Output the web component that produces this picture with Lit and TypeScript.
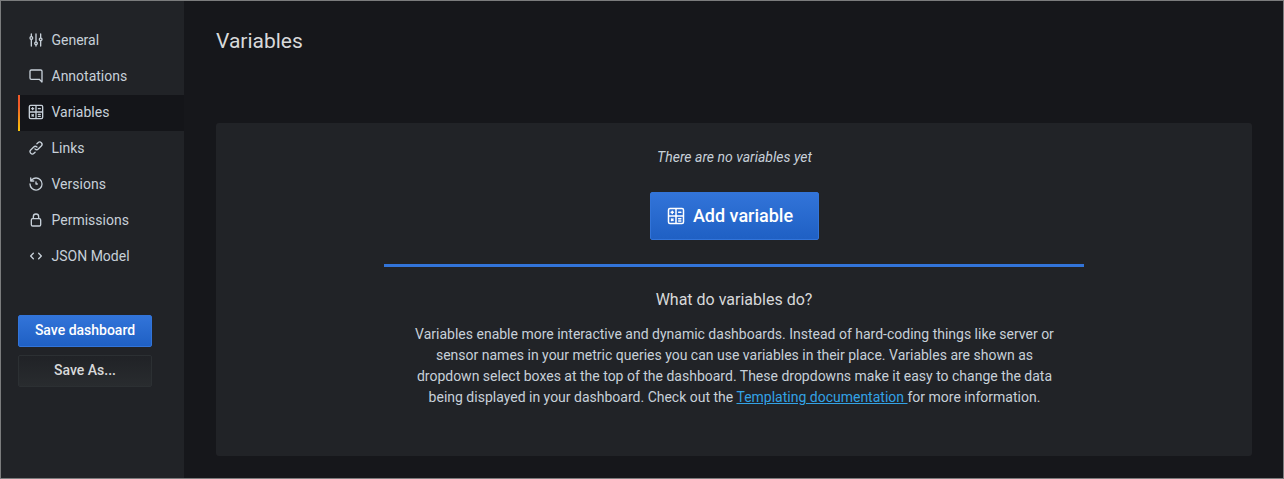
import { LitElement, html, css, svg } from "lit";
import { customElement } from "lit/decorators.js";
import { classMap } from "lit/directives/class-map.js";

const ICONS: Record<string, string> = {
  sliders:
    "M20,8.18V3a1,1,0,0,0-2,0V8.18a3,3,0,0,0,0,5.64V21a1,1,0,0,0,2,0V13.82a3,3,0,0,0,0-5.64ZM19,12a1,1,0,1,1,1-1A1,1,0,0,1,19,12Zm-6,2.18V3a1,1,0,0,0-2,0V14.18a3,3,0,0,0,0,5.64V21a1,1,0,0,0,2,0V19.82a3,3,0,0,0,0-5.64ZM12,18a1,1,0,1,1,1-1A1,1,0,0,1,12,18ZM6,6.18V3A1,1,0,0,0,4,3V6.18a3,3,0,0,0,0,5.64V21a1,1,0,0,0,2,0V11.82A3,3,0,0,0,6,6.18ZM5,10A1,1,0,1,1,6,9,1,1,0,0,1,5,10Z",
  comment:
    "M19,2H5A3,3,0,0,0,2,5V15a3,3,0,0,0,3,3H16.59l3.7,3.71A1,1,0,0,0,21,22a.84.84,0,0,0,.38-.08A1,1,0,0,0,22,21V5A3,3,0,0,0,19,2Zm1,16.59-2.29-2.3A1,1,0,0,0,17,16H5a1,1,0,0,1-1-1V5A1,1,0,0,1,5,4H19a1,1,0,0,1,1,1Z",
  calculator:
    "M20,1H4A3,3,0,0,0,1,4V20a3,3,0,0,0,3,3H20a3,3,0,0,0,3-3V4A3,3,0,0,0,20,1ZM11,21H4a1,1,0,0,1-1-1V13h8Zm0-10H3V4A1,1,0,0,1,4,3h7Zm10,9a1,1,0,0,1-1,1H13V13h8Zm0-9H13V3h7a1,1,0,0,1,1,1ZM5.5,8H6V8.5a1,1,0,0,0,2,0V8H8.5a1,1,0,0,0,0-2H8V5.5a1,1,0,0,0-2,0V6H5.5a1,1,0,0,0,0,2ZM15.5,8h3a1,1,0,0,0,0-2h-3a1,1,0,0,0,0,2ZM15.5,16.5h3a1,1,0,0,0,0-2h-3a1,1,0,0,0,0,2ZM15.5,19.5h3a1,1,0,0,0,0-2h-3a1,1,0,0,0,0,2ZM8.71,15.29a1,1,0,0,0-1.42,0L7,15.59l-.29-.3a1,1,0,0,0-1.42,1.42l.3.29-.3.29a1,1,0,0,0,1.42,1.42l.29-.3.29.3a1,1,0,0,0,1.42-1.42L8.41,17l.3-.29A1,1,0,0,0,8.71,15.29Z",
  link:
    "M10,17.55,8.23,19.27a2.47,2.47,0,0,1-3.5-3.5l4.54-4.55a2.46,2.46,0,0,1,3.39-.09l.12.1a1,1,0,0,0,1.4-1.43A2.75,2.75,0,0,0,14,9.59a4.46,4.46,0,0,0-6.09.22L3.31,14.36a4.48,4.48,0,0,0,6.33,6.33L11.37,19A1,1,0,0,0,10,17.55ZM20.69,3.31a4.49,4.49,0,0,0-6.33,0L12.63,5A1,1,0,0,0,14,6.45l1.73-1.72a2.47,2.47,0,0,1,3.5,3.5l-4.54,4.55a2.46,2.46,0,0,1-3.39.09l-.12-.1a1,1,0,0,0-1.4,1.43,2.75,2.75,0,0,0,.23.21,4.47,4.47,0,0,0,6.09-.22l4.55-4.55A4.49,4.49,0,0,0,20.69,3.31Z",
  history:
    "M12,2A10,10,0,0,0,5.12,4.77V3a1,1,0,0,0-2,0V7.5a1,1,0,0,0,1,1H8.62a1,1,0,0,0,0-2H6.22A8,8,0,1,1,4,12a1,1,0,0,0-2,0A10,10,0,1,0,12,2Zm0,6a1,1,0,0,0-1,1v3a1,1,0,0,0,1,1h2a1,1,0,0,0,0-2H13V9A1,1,0,0,0,12,8Z",
  lock:
    "M17,9V7A5,5,0,0,0,7,7V9a3,3,0,0,0-3,3v7a3,3,0,0,0,3,3H17a3,3,0,0,0,3-3V12A3,3,0,0,0,17,9ZM9,7a3,3,0,0,1,6,0V9H9Zm9,12a1,1,0,0,1-1,1H7a1,1,0,0,1-1-1V12a1,1,0,0,1,1-1H17a1,1,0,0,1,1,1Z",
  code:
    "M8.71,7.29a1,1,0,0,0-1.42,0l-4,4a1,1,0,0,0,0,1.42l4,4a1,1,0,0,0,1.42,0,1,1,0,0,0,0-1.42L5.41,12l3.3-3.29A1,1,0,0,0,8.71,7.29Zm12,4-4-4a1,1,0,0,0-1.42,1.42L18.59,12l-3.3,3.29a1,1,0,0,0,0,1.42,1,1,0,0,0,1.42,0l4-4A1,1,0,0,0,20.71,11.29Z",
};

const icon = (name: string, size = 16) => html`<svg
  width=${size} height=${size} viewBox="0 0 24 24" fill="currentColor" aria-hidden="true"
>${svg`<path d=${ICONS[name]}></path>`}</svg>`;

const NAV = [
  { label: "General", icon: "sliders" },
  { label: "Annotations", icon: "comment" },
  { label: "Variables", icon: "calculator", active: true },
  { label: "Links", icon: "link" },
  { label: "Versions", icon: "history" },
  { label: "Permissions", icon: "lock" },
  { label: "JSON Model", icon: "code" },
];

@customElement("app-root")
export class AppRoot extends LitElement {
  static styles = css`
    :host {
      display: flex;
      box-sizing: border-box;
      height: 479px;
      border: 1px solid #7b7c7d;
      background: #16171b;
      color: #c7d0d9;
      font: 400 14px/21px Roboto, "Liberation Sans", sans-serif;
    }
    * { box-sizing: border-box; }
    svg { display: block; flex: none; }
    .sidebar {
      width: 183px;
      flex: none;
      background: #212327;
      padding: 22px 0 0 17px;
    }
    .nav { display: flex; flex-direction: column; }
    .item {
      display: flex;
      align-items: center;
      gap: 7.5px;
      height: 36px;
      padding: 0 0 2px 10px;
      color: inherit;
      text-decoration: none;
    }
    .item.active {
      padding-left: 8px;
      background: #141519;
      border-left: 2px solid;
      border-image: linear-gradient(#f05a28 30%, #fbca0a 99%) 1;
    }
    .actions {
      display: flex;
      flex-direction: column;
      gap: 8px;
      width: 134px;
      margin-top: 40px;
    }
    button {
      display: flex;
      align-items: center;
      justify-content: center;
      height: 32px;
      padding: 0 0 2px;
      border-radius: 2px;
      font: 500 14px/21px Roboto, "Liberation Sans", sans-serif;
    }
    .primary {
      color: #fff;
      border: 1px solid #3274d9;
      background: linear-gradient(#3274d9, #1f60c4);
    }
    .secondary {
      color: #d8d9da;
      border: 1px solid #2c3033;
      background: linear-gradient(#202226, #292c2f) border-box;
    }
    .main {
      flex: 1;
      display: flex;
      flex-direction: column;
      padding: 26px 31px 22px 32px;
    }
    h1 { margin: 0; font-size: 21px; line-height: 28px; font-weight: 400; color: #d8d9da; }
    .card {
      flex: 1;
      margin-top: 68px;
      border-radius: 3px;
      background: #212327;
      display: flex;
      flex-direction: column;
      align-items: center;
      padding-top: 24px;
    }
    .empty { font-style: italic; padding-left: 1px; }
    .large {
      width: 169px;
      height: 48px;
      margin-top: 24px;
      gap: 8px;
      padding: 0 8px 0 0;
      font-size: 18px;
    }
    .large span { padding-bottom: 2px; }
    .rule { width: 700px; height: 3px; margin-top: 24px; background: #3274d9; }
    h2 { margin: 21px 0 0; font-size: 16px; line-height: 24px; font-weight: 400; color: #d8d9da; }
    p { margin: 12px 0 0; padding-left: 1px; text-align: center; white-space: nowrap; }
    a.doc { color: #33a2e5; text-decoration: underline; }
  `;

  render() {
    return html`
      <aside class="sidebar">
        <nav class="nav">
          ${NAV.map(
            (n) => html`<a class=${classMap({ item: true, active: !!n.active })}>${icon(n.icon)}<span>${n.label}</span></a>`
          )}
        </nav>
        <div class="actions">
          <button class="primary">Save dashboard</button>
          <button class="secondary">Save As...</button>
        </div>
      </aside>
      <main class="main">
        <h1>Variables</h1>
        <section class="card">
          <div class="empty">There are no variables yet</div>
          <button class="primary large">${icon("calculator", 18)}<span>Add variable</span></button>
          <div class="rule"></div>
          <h2>What do variables do?</h2>
          <p>
            Variables enable more interactive and dynamic dashboards. Instead of hard-coding things like server or<br />
            sensor names in your metric queries you can use variables in their place. Variables are shown as<br />
            dropdown select boxes at the top of the dashboard. These dropdowns make it easy to change the data<br />
            being displayed in your dashboard. Check out the <a class="doc">Templating documentation </a>for more information.
          </p>
        </section>
      </main>
    `;
  }
}
